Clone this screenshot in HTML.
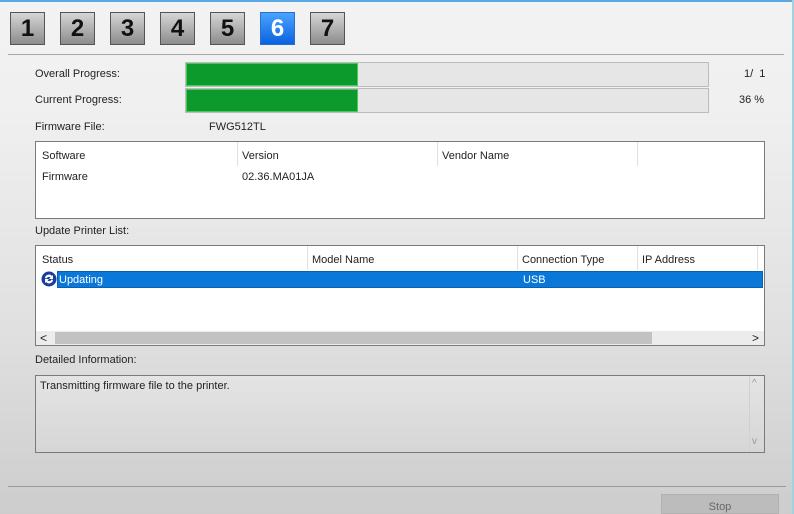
<!DOCTYPE html>
<html><head><style>
*{margin:0;padding:0;box-sizing:border-box}
html,body{overflow:hidden}
body{width:794px;height:514px;position:relative;font-family:"Liberation Sans",Tahoma,sans-serif;font-size:11px;color:#222;background:linear-gradient(#f3f3f3 0px,#efefef 120px,#e0e0e0 330px,#cdcdcd 514px)}
.a{position:absolute}
.n{position:absolute;top:12px;width:35px;height:33px;border:1px solid #555;background:linear-gradient(#d6d6d6,#8c8c8c);font:bold 24px "Liberation Sans",sans-serif;color:#111;text-align:center;line-height:32px}
.n.s{background:linear-gradient(#4aa3ff,#0a62e0);color:#fff;border-color:#2a6fd0}
.box{position:absolute;background:#fff;border:1px solid #7a7a7a}
.bar{position:absolute;left:185px;width:524px;height:25px;background:#e6e6e6;border:1px solid #bcbcbc}
.bar div{position:absolute;left:0;top:0;bottom:0;width:172px;background:#0b9a2b;border:1px solid #4cc760}
.vl{position:absolute;top:0;width:1px;height:24px;background:#e0e0e0}
</style></head><body>
<div class="a" style="left:0;top:0;width:794px;height:2px;background:#5aa9e6"></div>
<div class="n" style="left:10px">1</div>
<div class="n" style="left:60px">2</div>
<div class="n" style="left:110px">3</div>
<div class="n" style="left:160px">4</div>
<div class="n" style="left:210px">5</div>
<div class="n s" style="left:260px">6</div>
<div class="n" style="left:310px">7</div>
<div class="a" style="left:8px;top:54px;width:776px;height:1px;background:#a8a8a8"></div>

<div class="a" style="left:35px;top:68px">Overall Progress:</div>
<div class="a" style="left:35px;top:94px">Current Progress:</div>
<div class="bar" style="top:62px"><div></div></div>
<div class="bar" style="top:88px"><div></div></div>
<div class="a" style="left:744px;top:68px">1/&nbsp; 1</div>
<div class="a" style="left:739px;top:94px">36 %</div>
<div class="a" style="left:35px;top:121px">Firmware File:</div>
<div class="a" style="left:209px;top:121px">FWG512TL</div>

<div class="box" style="left:35px;top:141px;width:730px;height:78px">
<div class="vl" style="left:201px"></div><div class="vl" style="left:401px"></div><div class="vl" style="left:601px"></div>
<div class="a" style="left:6px;top:8px">Software</div>
<div class="a" style="left:206px;top:8px">Version</div>
<div class="a" style="left:406px;top:8px">Vendor Name</div>
<div class="a" style="left:6px;top:29px">Firmware</div>
<div class="a" style="left:206px;top:29px">02.36.MA01JA</div>
</div>

<div class="a" style="left:35px;top:225px">Update Printer List:</div>
<div class="box" style="left:35px;top:245px;width:730px;height:101px">
<div class="vl" style="left:271px"></div><div class="vl" style="left:481px"></div><div class="vl" style="left:601px"></div><div class="vl" style="left:721px"></div>
<div class="a" style="left:6px;top:8px">Status</div>
<div class="a" style="left:276px;top:8px">Model Name</div>
<div class="a" style="left:486px;top:8px">Connection Type</div>
<div class="a" style="left:606px;top:8px">IP Address</div>
<div class="a" style="left:21px;top:25px;width:706px;height:17px;background:#0a78d8;border:1px solid #0a5fb0"></div>
<svg class="a" style="left:5px;top:25px" width="16" height="16" viewBox="0 0 16 16"><circle cx="8" cy="8" r="7.5" fill="#1a3f9a"/><path d="M4 7a4 4 0 0 1 7-2l1-1v4H8l1.5-1.5A2.5 2.5 0 0 0 5.5 7.5z" fill="#fff"/><path d="M12 9a4 4 0 0 1-7 2l-1 1V8h4l-1.5 1.5A2.5 2.5 0 0 0 10.5 8.5z" fill="#fff"/></svg>
<div class="a" style="left:23px;top:28px;color:#fff">Updating</div>
<div class="a" style="left:487px;top:28px;color:#fff">USB</div>
<div class="a" style="left:0;top:85px;width:728px;height:14px;background:#ececec"></div>
<div class="a" style="left:19px;top:86px;width:597px;height:12px;background:#c2c2c2"></div>
<div class="a" style="left:4px;top:85px;font-size:12px">&lt;</div>
<div class="a" style="left:716px;top:85px;font-size:12px">&gt;</div>
</div>

<div class="a" style="left:35px;top:354px">Detailed Information:</div>
<div class="a" style="left:35px;top:375px;width:730px;height:78px;border:1px solid #7a7a7a;background:linear-gradient(#e4e4e4,#d6d6d6)">
<div class="a" style="left:4px;top:4px">Transmitting firmware file to the printer.</div>
<div class="a" style="left:713px;top:0;width:1px;height:76px;background:#d0d0d0"></div>
<div class="a" style="left:716px;top:2px;color:#999;font-size:10px">^</div>
<div class="a" style="left:716px;top:60px;color:#999;font-size:10px">v</div>
</div>

<div class="a" style="left:8px;top:486px;width:778px;height:1px;background:#9a9a9a"></div>
<div class="a" style="left:661px;top:494px;width:118px;height:20px;background:#bcbcbc;border:1px solid #b0b0b0;text-align:center;line-height:24px;color:#666">Stop</div>
<div class="a" style="left:792px;top:0;width:2px;height:514px;background:#9fd3e0"></div>
</body></html>
